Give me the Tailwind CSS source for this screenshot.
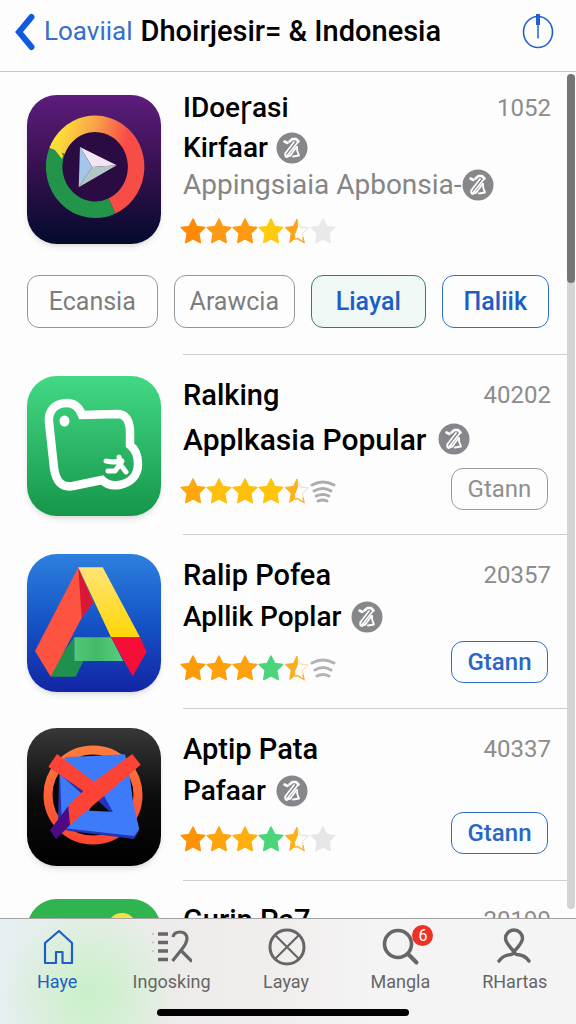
<!DOCTYPE html>
<html lang="id">
<head>
    <meta charset="UTF-8">
    <meta name="viewport" content="width=device-width, initial-scale=1.0">
    <title>Dhoirjesir= &amp; Indonesia</title>
    <script src="https://cdn.jsdelivr.net/npm/@tailwindcss/browser@4"></script>
</head>
<body class="h-screen flex flex-col overflow-hidden bg-[#fdfdfd] font-['Roboto','Noto_Sans',sans-serif] text-black">

    <!-- shared shapes -->
    <svg class="hidden">
        <symbol id="star" viewBox="0 0 26 26">
            <path d="M13 1l3.6 7.4 8.2 1.1-6 5.7 1.5 9.3-7.3-3.6-7.3 3.6 1.5-9.3-6-5.7 8.2-1.1z" stroke-linejoin="round" stroke-width="1.500" stroke="currentColor" fill="currentColor"/>
        </symbol>
        <symbol id="half" viewBox="0 0 26 26">
            <path d="M13 2l3.4 7 8 1-6 5.500 1.500 9-7-3.500" fill="none" stroke="#fbd9a0" stroke-width="1"/>
            <path d="M13 1l.5 8-3 7.500.5 4-5.300 4 1.500-9.300-6-5.700 8.200-1.100z" fill="currentColor" stroke="currentColor" stroke-linejoin="round"/>
            <path d="M11 21.500l2.500-1 6.500 4-1-5" fill="none" stroke="currentColor" stroke-width="1.300"/>
        </symbol>
        <symbol id="wifi" viewBox="0 0 26 26">
            <g fill="none" stroke="#adadad" stroke-width="2.800" stroke-linecap="round">
                <path d="M2 7q11-6 22 0M4 13q9-5 17 0M6 18q7-3 13 0M8 23q5-2 9 0"/>
            </g>
        </symbol>
        <symbol id="wifi3" viewBox="0 0 26 26">
            <g fill="none" stroke="#b3b3b3" stroke-width="3" stroke-linecap="round">
                <path d="M2 8q11-6 22 0M5 15q8-5 16 0M7 21q6-3 12 0"/>
            </g>
        </symbol>
        <symbol id="badge" viewBox="0 0 32 32">
            <circle cx="16" cy="16" r="15.500" fill="#86878b"/>
            <g fill="none" stroke="#fff" stroke-linecap="round" stroke-linejoin="round">
                <path d="M8.500 9.500l3 1.500" stroke-width="2.600"/>
                <path d="M13.500 9.500l3-2.500 3.500 0 2.500 2.500" stroke-width="2.600"/>
                <path d="M18 10L9.500 21M22 10L10.500 24.500M20.500 15l-6.500 9" stroke-width="1.700"/>
                <path d="M9.500 21q-1 4 1.500 4l4-2.500M21 15q-.5 4 2 8.500l-6 1" stroke-width="1.900"/>
            </g>
        </symbol>
    </svg>

    <header class="flex h-[72px] shrink-0 items-center border-b border-[#c4c4c4] pb-2 pl-3 pr-5">
        <a href="#" class="flex items-center gap-1 text-[26px] text-[#356fc9]">
            <svg class="h-10 w-7" viewBox="0 0 28 40"><path d="M19.500 5L7 20l12.500 15" fill="none" stroke="#0f5ae0" stroke-width="6" stroke-linecap="round"/></svg>
            Loaviial
        </a>
        <h1 class="ml-2 flex-1 whitespace-nowrap text-[29px] font-medium">Dhoirjesir= &amp; Indonesia</h1>
        <button aria-label="Info" class="size-9">
            <svg class="size-9" viewBox="0 0 36 36" fill="none" stroke="#1f62cf">
                <ellipse cx="18" cy="18" rx="14.500" ry="15.500" stroke-width="1.600"/>
                <path d="M18 0v11" stroke-width="4"/>
                <path d="M18 11v13" stroke-width="1.500" stroke-linecap="round"/>
            </svg>
        </button>
    </header>

    <div class="flex min-h-0 flex-1">
        <main class="min-w-0 flex-1 overflow-hidden">

            <section>
                <div class="flex pl-[27px] pr-4 pt-4">
                    <svg class="mt-[7px] h-[149px] w-[134px] shrink-0 rounded-[30px] shadow-md" viewBox="0 0 134 149">
                        <defs>
                            <linearGradient id="g1" x1="0" y1="0" x2="0" y2="1"><stop offset="0" stop-color="#5d1d7c"/><stop offset=".5" stop-color="#36104f"/><stop offset="1" stop-color="#030a2c"/></linearGradient>
                            <linearGradient id="g1r" x1="0" y1=".2" x2="1" y2=".5"><stop offset="0" stop-color="#fbe035"/><stop offset=".4" stop-color="#f9a04a"/><stop offset=".8" stop-color="#f84c47"/></linearGradient>
                        </defs>
                        <path d="M0 0h134v149H0z" fill="url(#g1)"/>
                        <ellipse cx="67" cy="72" rx="35" ry="37" fill="#2b0c42"/>
                        <path d="M30 56A41 43 0 1 1 85 111" fill="none" stroke="url(#g1r)" stroke-width="16.500"/>
                        <path d="M30 56A41 43 0 0 0 85 111" fill="none" stroke="#22954a" stroke-width="16.500"/>
                        <path d="M24 50l11 14 1-3-5-14z" fill="#f6dc38"/>
                        <path d="M53 52l36.700 18.300L65.300 72z" fill="#f3e6f3"/>
                        <path d="M53 52l12.300 20-13.600 20.300z" fill="#a3c6ea"/>
                        <path d="M89.700 70.300L65.300 72 51.700 92.300z" fill="#b2c7c5"/>
                    </svg>
                    <div class="ml-[22px] min-w-0 flex-1">
                        <div class="flex justify-between">
                            <h2 class="text-[28px] font-medium leading-10">IDoeɼasi</h2>
                            <span class="text-2xl leading-10 text-[#8c8c8c]">1052</span>
                        </div>
                        <p class="flex h-10 items-center gap-2 text-[28px] font-medium">Kirfaar <svg class="size-8"><use href="#badge"/></svg></p>
                        <p class="flex h-[34px] items-center whitespace-nowrap text-[28px] text-[#858585]">Appingsiaia Apbonsia-<svg class="size-8 shrink-0"><use href="#badge"/></svg></p>
                        <div class="-ml-[3px] mt-4 flex">
                            <svg class="size-[26px] text-[#fe8a06]"><use href="#star"/></svg>
                            <svg class="size-[26px] text-[#fd9a14]"><use href="#star"/></svg>
                            <svg class="size-[26px] text-[#fd9a10]"><use href="#star"/></svg>
                            <svg class="size-[26px] text-[#ffcb0c]"><use href="#star"/></svg>
                            <svg class="size-[26px] text-[#f9a51b]"><use href="#half"/></svg>
                            <svg class="size-[26px] text-[#e9e9e9]"><use href="#star"/></svg>
                        </div>
                    </div>
                </div>
                <div class="mt-[31px] grid grid-cols-[130fr_121fr_114fr_107fr] gap-4 pl-[27px] pr-[18px] text-[25px]">
                    <button class="h-[53px] rounded-xl border border-[#959595] text-[#7d7d7d]">Ecansia</button>
                    <button class="h-[53px] rounded-xl border border-[#959595] text-[#7d7d7d]">Arawcia</button>
                    <button class="h-[53px] rounded-xl border border-[#2f8062] bg-[#f0f8f6] font-medium text-[#1d5ec6]">Liayal</button>
                    <button class="h-[53px] rounded-xl border border-[#2f6fcb] font-medium text-[#1d5ec6]">Пaliik</button>
                </div>
            </section>

            <hr class="ml-[183px] mt-[26px] border-[#cfcfcf]">

            <section class="flex h-[179px] pl-[27px] pr-4 pt-[18px]">
                <svg class="mt-[3px] h-[140px] w-[134px] shrink-0 rounded-[30px] shadow-md" viewBox="0 0 134 140">
                    <defs><linearGradient id="g2" x1="0" y1="0" x2="0" y2="1"><stop offset="0" stop-color="#42d985"/><stop offset="1" stop-color="#16964a"/></linearGradient></defs>
                    <path d="M0 0h134v140H0z" fill="url(#g2)"/>
                    <path d="M55 39C52 31 47 27 40 27C28 27 21 35 22 46L27 92C29 106 35 112 46 110L75 104C80 109 86 110 92 109C103 107 111 100 111 88C111 80 108 73 103 69L103 54C102 43 98 38 90 38Z" fill="none" stroke="#fff" stroke-width="8.500"/>
                    <ellipse cx="37.500" cy="45" rx="5" ry="5.500" fill="#fff"/>
                    <path d="M79 85l6 1 10-1M92 81l2 6-6 8-7 0M93 88l6 8" fill="none" stroke="#fff" stroke-width="5" stroke-linecap="round" stroke-linejoin="round"/>
                </svg>
                <div class="ml-[22px] min-w-0 flex-1">
                    <div class="flex justify-between">
                        <h2 class="text-[29px] font-medium leading-[44px]">Ralking</h2>
                        <span class="text-2xl leading-[44px] text-[#8c8c8c]">40202</span>
                    </div>
                    <p class="flex h-[44px] items-center gap-3 whitespace-nowrap text-[30px] font-medium">Applkasia Popular <svg class="size-8 shrink-0"><use href="#badge"/></svg></p>
                    <div class="mt-[7px] flex items-start justify-between pr-[3px]">
                        <div class="-ml-[3px] mt-2.5 flex">
                            <svg class="size-[26px] text-[#fea70e]"><use href="#star"/></svg>
                            <svg class="size-[26px] text-[#fec00c]"><use href="#star"/></svg>
                            <svg class="size-[26px] text-[#fec00c]"><use href="#star"/></svg>
                            <svg class="size-[26px] text-[#fec30c]"><use href="#star"/></svg>
                            <svg class="size-[26px] text-[#fbb21b]"><use href="#half"/></svg>
                            <svg class="size-[26px]"><use href="#wifi"/></svg>
                        </div>
                        <button class="h-[42px] w-[97px] rounded-xl border border-[#9a9a9a] text-2xl leading-none text-[#8f8f8f]">Gtann</button>
                    </div>
                </div>
            </section>

            <hr class="ml-[183px] border-[#cfcfcf]">

            <section class="flex h-[173px] pl-[27px] pr-4 pt-[19px]">
                <svg class="h-[138px] w-[134px] shrink-0 rounded-[30px] shadow-md" viewBox="0 0 134 138">
                    <defs>
                        <linearGradient id="g3" x1="0" y1="0" x2="0" y2="1"><stop offset="0" stop-color="#2d80df"/><stop offset=".5" stop-color="#1553c6"/><stop offset="1" stop-color="#1325a5"/></linearGradient>
                        <linearGradient id="g3y" x1="0" y1="0" x2="0" y2="1"><stop offset="0" stop-color="#ffe477"/><stop offset="1" stop-color="#ffd705"/></linearGradient>
                        <linearGradient id="g3g"><stop offset="0" stop-color="#50c878"/><stop offset=".45" stop-color="#44b969"/><stop offset="1" stop-color="#58ce80"/></linearGradient>
                    </defs>
                    <path d="M0 0h134v138H0z" fill="url(#g3)"/>
                    <path d="M30 107l17.300-23.700V107h9l-7.600 15.700h-25z" fill="#20914d"/>
                    <path d="M51.300 13.300l15 35-11.600 15.400-31 59L8 97z" fill="#fd5340"/>
                    <path d="M51.300 14l15 34.300-11.600 15.400z" fill="#da1735"/>
                    <path d="M47.300 83.300H84L96.300 107h-49z" fill="url(#g3g)"/>
                    <path d="M51.300 13.300h24.400l37.300 70H84z" fill="url(#g3y)"/>
                    <path d="M84 83.300h29l6.700 14.400-14 24.600z" fill="#f50f38"/>
                </svg>
                <div class="ml-[22px] min-w-0 flex-1">
                    <div class="flex justify-between">
                        <h2 class="text-[29px] font-medium leading-[42px]">Ralip Pofea</h2>
                        <span class="text-2xl leading-[42px] text-[#8c8c8c]">20357</span>
                    </div>
                    <p class="flex h-[42px] items-center gap-2.5 text-[28px] font-medium">Apllik Poplar <svg class="size-8"><use href="#badge"/></svg></p>
                    <div class="mt-[3px] flex items-start justify-between pr-[3px]">
                        <div class="-ml-[3px] mt-3.5 flex">
                            <svg class="size-[26px] text-[#fd9a06]"><use href="#star"/></svg>
                            <svg class="size-[26px] text-[#fda00a]"><use href="#star"/></svg>
                            <svg class="size-[26px] text-[#fda10d]"><use href="#star"/></svg>
                            <svg class="size-[26px] text-[#4bd57b]"><use href="#star"/></svg>
                            <svg class="size-[26px] text-[#fbaf1b]"><use href="#half"/></svg>
                            <svg class="size-[26px]"><use href="#wifi3"/></svg>
                        </div>
                        <button class="h-[42px] w-[97px] rounded-xl border border-[#2f6cc6] bg-[#fbfdff] text-2xl font-medium leading-none text-[#2b66c4]">Gtann</button>
                    </div>
                </div>
            </section>

            <hr class="ml-[183px] border-[#cfcfcf]">

            <section class="flex h-[171px] pl-[27px] pr-4 pt-[19px]">
                <svg class="h-[138px] w-[134px] shrink-0 rounded-[30px] shadow-md" viewBox="0 0 134 138">
                    <defs>
                        <linearGradient id="g4" x1="0" y1="0" x2="0" y2="1"><stop offset="0" stop-color="#383838"/><stop offset=".5" stop-color="#0c0c0c"/><stop offset="1" stop-color="#000"/></linearGradient>
                        <linearGradient id="g4r" x1="0" y1="0" x2="0" y2="1"><stop offset="0" stop-color="#ff7a3c"/><stop offset="1" stop-color="#fd4630"/></linearGradient>
                    </defs>
                    <path d="M0 0h134v138H0z" fill="url(#g4)"/>
                    <circle cx="66" cy="67" r="45" fill="#080808" stroke="url(#g4r)" stroke-width="9"/>
                    <path d="M32 45l-1 55 12 3 64 8 5-8-60-18z" fill="#2732b4"/>
                    <path fill-rule="evenodd" d="M38 29.300L98 26.300 103 50l3 24 6.300 27.300L107 108 35 100l-2-55zM69 70l16 13.700-23-1z" fill="#3d7bfa"/>
                    <path d="M22 39l13 9 20 18 4-5-20-20z" fill="#252fae"/>
                    <path d="M69 71l7-5 10 18h-3z" fill="#2633b8"/>
                    <path d="M30 26l37 27.700L105.300 26l8.400 10.700L43 97l-1.700-19 15-15-35-24.300z" fill="#fc4335"/>
                    <path d="M41.300 78L43 97l-14 14.300L23 102z" fill="#4d0b83"/>
                </svg>
                <div class="ml-[22px] min-w-0 flex-1">
                    <div class="flex justify-between">
                        <h2 class="text-[29px] font-medium leading-[42px]">Aptip Pata</h2>
                        <span class="text-2xl leading-[42px] text-[#8c8c8c]">40337</span>
                    </div>
                    <p class="flex h-[42px] items-center gap-2.5 text-[28px] font-medium">Pafaar <svg class="size-8"><use href="#badge"/></svg></p>
                    <div class="flex items-start justify-between pr-[3px]">
                        <div class="-ml-[3px] mt-3.5 flex">
                            <svg class="size-[26px] text-[#fe9206]"><use href="#star"/></svg>
                            <svg class="size-[26px] text-[#fda40d]"><use href="#star"/></svg>
                            <svg class="size-[26px] text-[#feaf0d]"><use href="#star"/></svg>
                            <svg class="size-[26px] text-[#4bd57b]"><use href="#star"/></svg>
                            <svg class="size-[26px] text-[#fbaf1b]"><use href="#half"/></svg>
                            <svg class="size-[26px] text-[#e6e6e6]"><use href="#star"/></svg>
                        </div>
                        <button class="h-[42px] w-[97px] rounded-xl border border-[#2f6cc6] bg-[#fbfdff] text-2xl font-medium leading-none text-[#2b66c4]">Gtann</button>
                    </div>
                </div>
            </section>

            <hr class="ml-[183px] border-[#cfcfcf]">

            <section class="flex pl-[27px] pr-4 pt-[18px]">
                <svg class="h-[138px] w-[134px] shrink-0 rounded-[30px]" viewBox="0 0 134 138">
                    <path d="M0 0h134v138H0z" fill="#30b44f"/>
                    <circle cx="95" cy="29" r="15" fill="#f8df3e"/>
                </svg>
                <div class="ml-[22px] flex flex-1 justify-between">
                    <h2 class="text-[29px] font-medium leading-[42px]">Gurip Pa7</h2>
                    <span class="text-2xl leading-[42px] text-[#8c8c8c]">20199</span>
                </div>
            </section>
        </main>

        <!-- scrollbar -->
        <div class="mb-[9px] mr-px mt-[2px] w-2 rounded-full bg-[#d3d3d3]">
            <div class="h-[25%] rounded-full bg-[#757575]"></div>
        </div>
    </div>

    <nav class="shrink-0 border-t border-[#a3a3a3] bg-[#f3f2f2] bg-[radial-gradient(circle_at_90px_75px,#c8f0c8_0px,#d3efd3_30px,#e9eeea00_90px),linear-gradient(90deg,#e6eff2_0%,#e6eee8_14%,#eeebeb_30%,#f2eeee_50%,#f4f4f4_65%)]">
        <div class="grid grid-cols-5 pr-1 pt-2 text-lg leading-6 text-[#666]">
            <a href="#" class="flex flex-col items-center gap-[3px] text-[#1c60c4]">
                <svg class="size-10" viewBox="0 0 40 40" fill="none" stroke="currentColor" stroke-width="2.200" stroke-linejoin="round"><path d="M8 16L22 4l13 12v20h-9.500V25h-6.500v11H8z"/></svg>
                Haye
            </a>
            <a href="#" class="flex flex-col items-center gap-[3px]">
                <svg class="size-10" viewBox="0 0 40 40" fill="none" stroke="currentColor">
                    <path d="M6 7h10M6 15.500h10M6 24h10M6 32.500h10" stroke-width="3.500"/>
                    <path d="M0 7h2M0 15.500h2M0 24h2" stroke="#c9c9c9" stroke-width="2"/>
                    <path d="M21 10q1-5 7-5t7 6q0 5-5 11l-9.500 12M28 22.500l12 12" stroke-width="3.200"/>
                </svg>
                Ingosking
            </a>
            <a href="#" class="flex flex-col items-center gap-[3px]">
                <svg class="size-10" viewBox="0 0 40 40" fill="none" stroke="currentColor"><circle cx="21" cy="20" r="17" stroke-width="3"/><path d="M9 8l24 24M33 8L9 32" stroke-width="2.200"/></svg>
                Layay
            </a>
            <a href="#" class="relative flex flex-col items-center gap-[3px]">
                <svg class="size-10" viewBox="0 0 40 40" fill="none" stroke="currentColor" stroke-linecap="round"><circle cx="18" cy="17" r="13.500" stroke-width="3.600"/><path d="M28 27l8.500 8.500" stroke-width="4"/></svg>
                Mangla
                <span class="absolute left-1/2 -top-0.5 ml-3 size-[21px] rounded-full bg-[#ee3124] text-center text-base leading-[21px] text-white">6</span>
            </a>
            <a href="#" class="flex flex-col items-center gap-[3px]">
                <svg class="size-10" viewBox="0 0 40 40" fill="none" stroke="currentColor" stroke-width="3.400" stroke-linecap="round"><path d="M4 34q4-6 12-6.500q4-1 2-4C13 18 10.500 15 10.500 11.500a8.500 8.500 0 0 1 17 0C27.500 15 25 18 20 23.500q-2 3 2 4Q30 28 34 34"/></svg>
                RHartas
            </a>
        </div>
        <div class="pr-[10px]">
            <div class="mx-auto mb-2 mt-[15px] h-[7px] w-[252px] rounded-full bg-black"></div>
        </div>
    </nav>
</body>
</html>
